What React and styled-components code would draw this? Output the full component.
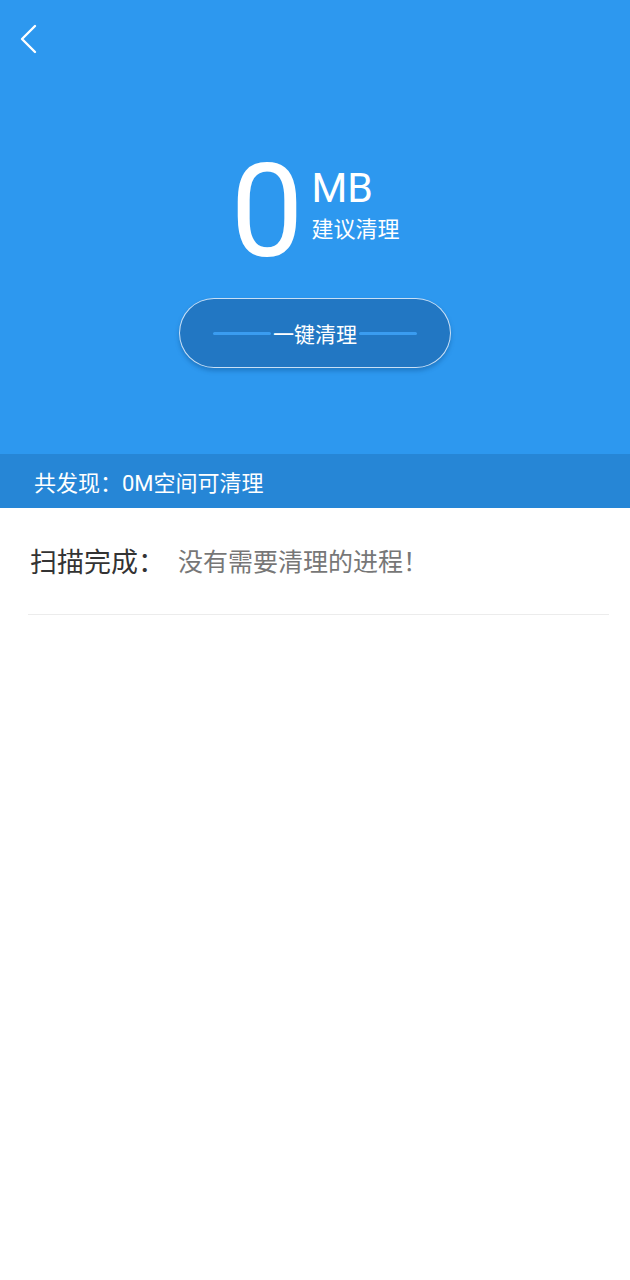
import React from "react";
import styled, { createGlobalStyle } from "styled-components";

const GlobalStyle = createGlobalStyle`
  html, body {
    margin: 0;
    padding: 0;
    background: #ffffff;
  }
  body {
    font-family: "Roboto", "Noto Sans CJK SC", sans-serif;
  }
`;

const Page = styled.div`
  width: 630px;
  min-height: 1280px;
  background: #ffffff;
`;

const Header = styled.header`
  height: 454px;
  background: #2d98ef;
  padding-top: 24px;
  box-sizing: border-box;
  display: flex;
  flex-direction: column;
  align-items: center;
`;

const BackButton = styled.button`
  align-self: flex-start;
  margin-left: 18px;
  width: 22px;
  height: 30px;
  padding: 0;
  border: none;
  background: none;
  cursor: pointer;
  display: flex;
`;

const Hero = styled.div`
  margin-top: 93px;
  display: flex;
  align-items: flex-start;
  gap: 8px;
  color: #ffffff;
`;

const BigNumber = styled.span`
  font-family: "Roboto", sans-serif;
  font-size: 130px;
  line-height: 1;
  font-weight: 400;
`;

const UnitCol = styled.div`
  margin-top: 21px;
  display: flex;
  flex-direction: column;
  gap: 10px;
`;

const Unit = styled.span`
  font-family: "Roboto", sans-serif;
  font-size: 41px;
  line-height: 1;
`;

const Hint = styled.span`
  font-size: 22px;
  line-height: 1;
  white-space: nowrap;
`;

const CleanButton = styled.button`
  margin-top: 21px;
  width: 272px;
  height: 70px;
  border-radius: 35px;
  border: 1.5px solid rgba(230, 242, 255, 0.85);
  background: #2277c3;
  box-shadow: 0 3px 4px rgba(10, 70, 130, 0.35);
  display: flex;
  align-items: center;
  justify-content: center;
  gap: 2px;
  padding: 0;
  cursor: pointer;
  font-family: "Roboto", "Noto Sans CJK SC", sans-serif;
  font-size: 21px;
  color: #ffffff;
`;

const Line = styled.span`
  width: 58px;
  height: 3px;
  border-radius: 2px;
  background: #3a9cf0;
`;

const Summary = styled.div`
  height: 54px;
  background: #2686d6;
  color: #ffffff;
  font-size: 22px;
  display: flex;
  align-items: center;
  padding-left: 34px;
`;

const ResultRow = styled.div`
  margin: 0 21px 0 28px;
  height: 107px;
  border-bottom: 1px solid #ececec;
  display: flex;
  align-items: center;
  padding-left: 2px;
  padding-bottom: 2px;
  box-sizing: border-box;
`;

const ResultLabel = styled.span`
  font-size: 27px;
  color: #333333;
  width: 148px;
`;

const ResultText = styled.span`
  font-size: 25px;
  color: #777777;
`;

const BackIcon = () => (
  <svg width="22" height="30" viewBox="0 0 22 30" fill="none">
    <polyline
      points="17,2 4,15 17,28"
      stroke="#ffffff"
      strokeWidth="2.4"
      strokeLinecap="round"
      strokeLinejoin="round"
    />
  </svg>
);

export default function App() {
  return (
    <Page>
      <GlobalStyle />
      <Header>
        <BackButton aria-label="返回">
          <BackIcon />
        </BackButton>
        <Hero>
          <BigNumber>0</BigNumber>
          <UnitCol>
            <Unit>MB</Unit>
            <Hint>建议清理</Hint>
          </UnitCol>
        </Hero>
        <CleanButton>
          <Line />
          一键清理
          <Line />
        </CleanButton>
      </Header>
      <Summary>共发现：0M空间可清理</Summary>
      <ResultRow>
        <ResultLabel>扫描完成：</ResultLabel>
        <ResultText>没有需要清理的进程！</ResultText>
      </ResultRow>
    </Page>
  );
}
